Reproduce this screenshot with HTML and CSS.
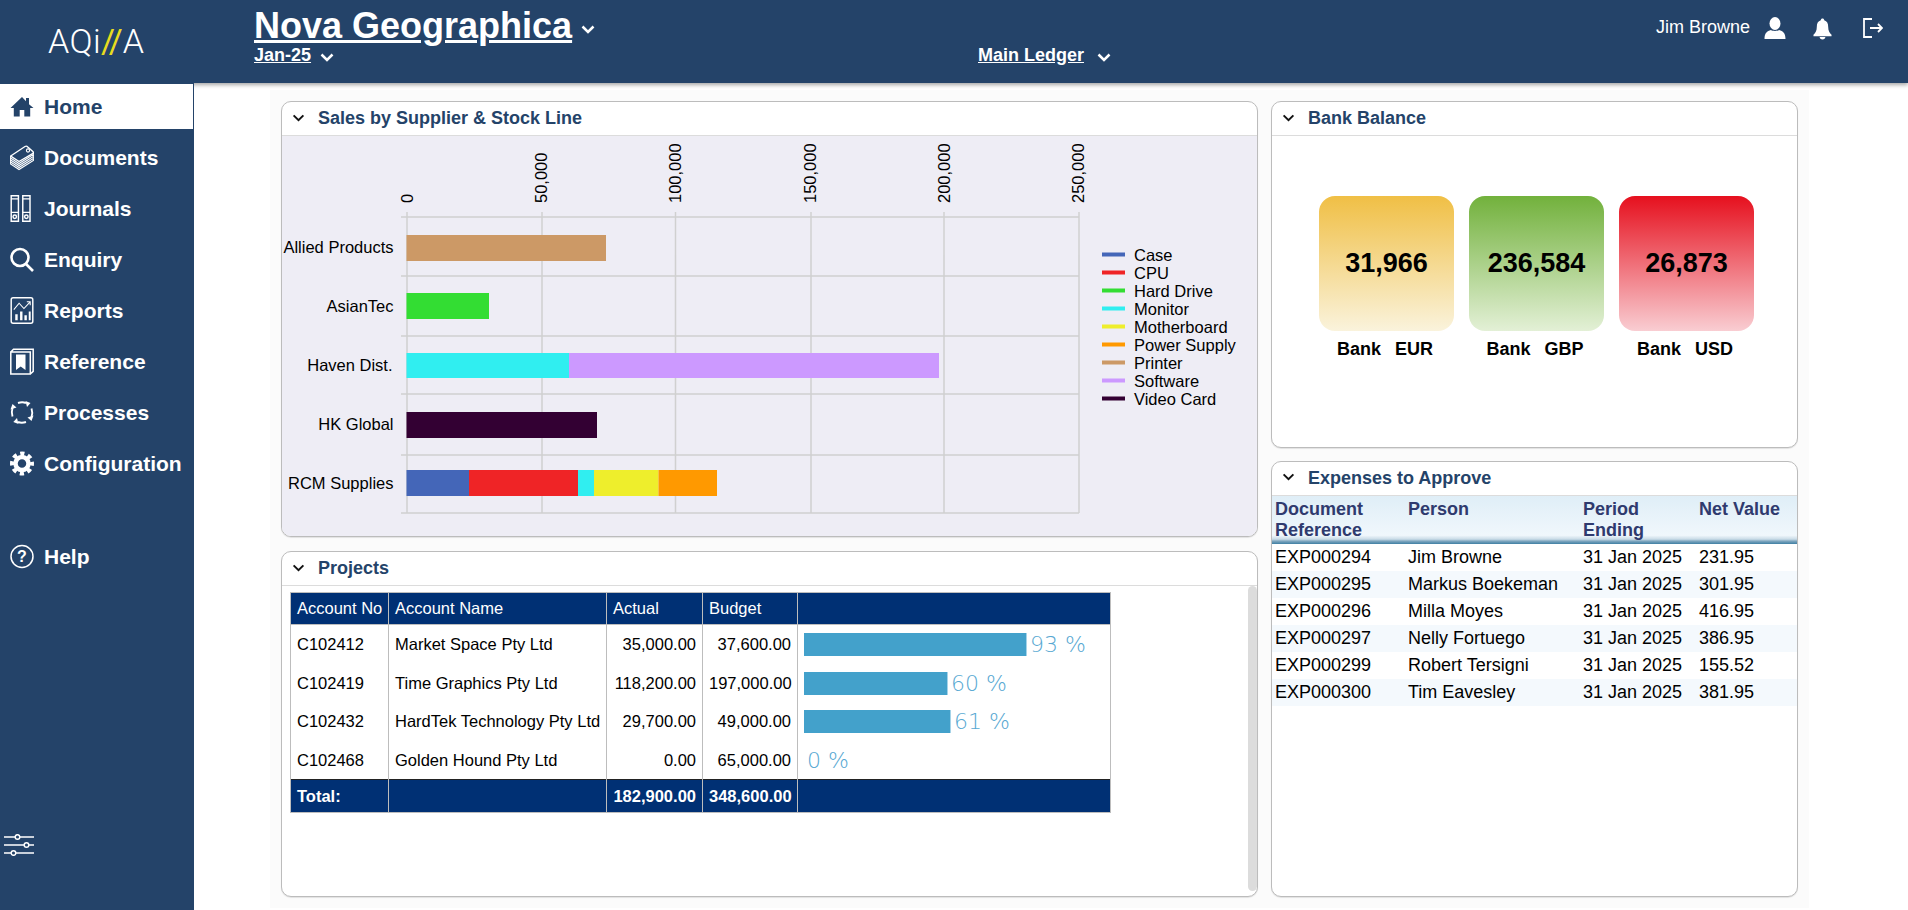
FILE: index.html
```html
<!DOCTYPE html>
<html lang="en">
<head>
<meta charset="utf-8">
<title>Nova Geographica</title>
<link rel="stylesheet" href="styles.css">
</head>
<body>
<div class="app">
  <header class="topbar">
    <div class="logo">AQi<span class="logo-slash">//</span>A</div>
    <div class="titles">
      <div class="company"><a class="company-name">Nova Geographica</a>
        <svg class="chev chev-title" viewBox="0 0 14 9"><path d="M1.500 1.500 7 7l5.500-5.500"/></svg></div>
      <div class="period"><a class="link18">Jan-25</a>
        <svg class="chev chev-sub" viewBox="0 0 14 9"><path d="M1.500 1.500 7 7l5.500-5.500"/></svg></div>
    </div>
    <div class="ledger"><a class="link18">Main Ledger</a>
      <svg class="chev chev-sub" viewBox="0 0 14 9"><path d="M1.500 1.500 7 7l5.500-5.500"/></svg></div>
    <div class="user">
      <span class="user-name">Jim Browne</span>
      <svg class="ico-user" viewBox="0 0 22 22"><ellipse cx="11" cy="6.500" rx="5.500" ry="6.500"/><path d="M0.500 22c0-6 2.500-8 6.500-9 1.200 1.200 6.800 1.200 8 0 4 1 6.500 3 6.500 9z"/></svg>
      <svg class="ico-bell" viewBox="0 0 20 22"><path d="M10 0c1 0 1.700.7 1.800 1.900 3 .8 4.200 3.500 4.200 7 0 4 1.300 6 3.500 8.100v1.500H.5V17C2.700 14.900 4 12.900 4 8.900c0-3.500 1.200-6.200 4.200-7C8.300.7 9 0 10 0z"/><path d="M7 19.500h6c0 1.500-1.300 2.500-3 2.500s-3-1-3-2.500z"/></svg>
      <svg class="ico-exit" viewBox="0 0 20 20"><path d="M9 1H1v18h8M7 10h12M15 6l4 4-4 4"/></svg>
    </div>
  </header>
  <div class="body">
    <nav class="sidebar">
      <a class="nav-item active">
        <svg class="nav-ico" viewBox="0 0 24 24"><path class="solid-dark" d="M12 2.500 0.500 13.500h3.300V22h5.900v-6.500h4.600V22h5.900v-8.500h3.300L19 9.700V3.500h-3v3.300z"/></svg>
        <span>Home</span></a>
      <a class="nav-item">
        <svg class="nav-ico" viewBox="0 0 24 24"><path class="line-thin" d="M.6 10.500v2l8.400 5.500 14.400-9v-2M.6 12.500v2l8.400 5.500 14.400-9v-2M.6 14.500v2l8.400 5.500 14.400-9v-2M.6 16.500v2l8.400 5.500 14.400-9v-2"/><path class="line" d="M.7 10.500 15 1c1-.6 2-.4 2.800.4l5 4.500c.8.800.8 1.700-.2 2.300L9 16z"/><circle class="line-thin" cx="18" cy="5" r="1.600"/></svg>
        <span>Documents</span></a>
      <a class="nav-item">
        <svg class="nav-ico" viewBox="0 0 24 28"><path class="line-mid" d="M.8.8h7.500v26.400H.800zM.8 4h7.500M.8 18h7.500M12.800.8h7.500v26.400h-7.500zM12.800 4h7.500M12.800 18h7.500"/><circle class="line-mid" cx="4.500" cy="22.500" r="1.800"/><circle class="line-mid" cx="16.500" cy="22.500" r="1.800"/></svg>
        <span>Journals</span></a>
      <a class="nav-item">
        <svg class="nav-ico" viewBox="0 0 24 24"><circle class="line-bold" cx="10" cy="10" r="8.500"/><path class="line-bold" d="M16 16.500l7 7"/></svg>
        <span>Enquiry</span></a>
      <a class="nav-item">
        <svg class="nav-ico nav-ico-tall" viewBox="0 0 24 28"><rect class="line-mid" x=".8" y=".8" width="22.400" height="26.400" rx="2"/><path class="line-thin" d="M3.500 13 9 6.500l5 5.500 6-6.500M17 5h3.500v3.500"/><path class="bars-w" d="M5 18h2.500v6H5zM10 15h2.500v9H10zM14.500 19H17v5h-2.500zM19 15h2v9h-2z"/></svg>
        <span>Reports</span></a>
      <a class="nav-item">
        <svg class="nav-ico" viewBox="0 0 24 26"><path class="line-mid" d="M.8 3.500h19.500v22H.800zM.8 3.500 3.500.8h19.700v22l-2.900 2.700"/><path class="bars-w" d="M6 6h9.500v15.500L10.700 18 6 21.500z"/></svg>
        <span>Reference</span></a>
      <a class="nav-item">
        <svg class="nav-ico" viewBox="0 0 24 24"><path class="line-strong" d="M8 2.500c3-1 5.500-1 8 0M21.500 8c1 2.800 1 5.500 0 8.500M16 21.500c-3 1-5.500 1-8 0M2.500 16C1.500 13 1.500 10.500 2.500 7.500"/><path class="bars-w" d="M15.500.5l5 2-3.500 4zM23.500 15l-2 5.500-4-3.500zM8.500 23.500 3.300 21.500 7 17.500zM.5 9 2.500 3.500 6.500 7z"/></svg>
        <span>Processes</span></a>
      <a class="nav-item">
        <svg class="nav-ico" viewBox="0 0 24 24"><circle class="gear-teeth" cx="12" cy="12" r="10"/><circle class="gear-ring" cx="12" cy="12" r="6.500"/></svg>
        <span>Configuration</span></a>
      <a class="nav-item nav-help">
        <svg class="nav-ico" viewBox="0 0 24 24"><circle class="line-mid" cx="12" cy="12" r="11"/><text class="help-q" x="12" y="17.500">?</text></svg>
        <span>Help</span></a>
      <svg class="sliders" viewBox="0 0 30 22"><path class="line-slider" d="M0 3h11M16 3h14M0 11h20M25 11h5M0 19h7M12 19h18"/><circle class="line-slider" cx="13.500" cy="3" r="2.300"/><circle class="line-slider" cx="22.500" cy="11" r="2.300"/><circle class="line-slider" cx="9.500" cy="19" r="2.300"/></svg>
    </nav>
    <main class="main">
      <div class="dash">
        <div class="col col-left">
          <section class="card card-tall">
            <div class="card-head"><svg class="chev-card" viewBox="0 0 14 9"><path d="M1.500 1.500 7 7l5.500-5.500"/></svg><h2>Sales by Supplier &amp; Stock Line</h2></div>
            <div class="chart-body">
              <svg class="chart" viewBox="282 136 974 400">
                <g class="grid">
                  <path d="M401 217H1079M401 276H1079M401 336H1079M401 394H1079M401 455H1079M401 513H1079"/>
                  <path d="M407 212V513M542 212V513M675.500 212V513M811 212V513M944 212V513M1079 212V513"/>
                </g>
                <g class="axis">
                  <text transform="translate(413 203) rotate(-90)">0</text>
                  <text transform="translate(547 203) rotate(-90)">50,000</text>
                  <text transform="translate(681 203) rotate(-90)">100,000</text>
                  <text transform="translate(816 203) rotate(-90)">150,000</text>
                  <text transform="translate(950 203) rotate(-90)">200,000</text>
                  <text transform="translate(1084 203) rotate(-90)">250,000</text>
                </g>
                <g class="cats">
                  <text x="393.500" y="253">Allied Products</text>
                  <text x="393.500" y="312">AsianTec</text>
                  <text x="392.500" y="371">Haven Dist.</text>
                  <text x="393.500" y="430">HK Global</text>
                  <text x="393.500" y="489">RCM Supplies</text>
                </g>
                <rect class="c-printer" x="406.500" y="235" width="199.500" height="26"/>
                <rect class="c-hdd" x="406.500" y="293" width="82.500" height="26"/>
                <rect class="c-monitor" x="406.500" y="353" width="162.500" height="25"/>
                <rect class="c-software" x="569" y="353" width="370" height="25"/>
                <rect class="c-video" x="406.500" y="412" width="190.500" height="26"/>
                <rect class="c-case" x="406.500" y="470" width="62.500" height="26"/>
                <rect class="c-cpu" x="469" y="470" width="109" height="26"/>
                <rect class="c-monitor" x="578" y="470" width="16" height="26"/>
                <rect class="c-mobo" x="594" y="470" width="64.500" height="26"/>
                <rect class="c-psu" x="658.500" y="470" width="58.500" height="26"/>
                <g class="legend">
                  <rect class="c-case" x="1102" y="252.500" width="23" height="4"/><text x="1134" y="261">Case</text>
                  <rect class="c-cpu" x="1102" y="270.500" width="23" height="4"/><text x="1134" y="279">CPU</text>
                  <rect class="c-hdd" x="1102" y="288.500" width="23" height="4"/><text x="1134" y="297">Hard Drive</text>
                  <rect class="c-monitor" x="1102" y="306.500" width="23" height="4"/><text x="1134" y="315">Monitor</text>
                  <rect class="c-mobo" x="1102" y="324.500" width="23" height="4"/><text x="1134" y="333">Motherboard</text>
                  <rect class="c-psu" x="1102" y="342.500" width="23" height="4"/><text x="1134" y="351">Power Supply</text>
                  <rect class="c-printer" x="1102" y="360.500" width="23" height="4"/><text x="1134" y="369">Printer</text>
                  <rect class="c-software" x="1102" y="378.500" width="23" height="4"/><text x="1134" y="387">Software</text>
                  <rect class="c-video" x="1102" y="396.500" width="23" height="4"/><text x="1134" y="405">Video Card</text>
                </g>
              </svg>
            </div>
          </section>
          <section class="card card-short">
            <div class="card-head"><svg class="chev-card" viewBox="0 0 14 9"><path d="M1.500 1.500 7 7l5.500-5.500"/></svg><h2>Projects</h2></div>
            <div class="projects-body">
              <div class="projects-wrap">
                <table class="ptable">
                  <colgroup><col class="pc1"><col class="pc2"><col class="pc3"><col class="pc4"><col class="pc5"></colgroup>
                  <thead><tr><th>Account No</th><th>Account Name</th><th>Actual</th><th>Budget</th><th></th></tr></thead>
                  <tbody>
                    <tr><td>C102412</td><td>Market Space Pty Ltd</td><td class="num">35,000.00</td><td class="num">37,600.00</td><td><div class="pct"><div class="pct-bar" style="width:223px"></div><span class="pct-text">93 %</span></div></td></tr>
                    <tr><td>C102419</td><td>Time Graphics Pty Ltd</td><td class="num">118,200.00</td><td class="num">197,000.00</td><td><div class="pct"><div class="pct-bar" style="width:144px"></div><span class="pct-text">60 %</span></div></td></tr>
                    <tr><td>C102432</td><td>HardTek Technology Pty Ltd</td><td class="num">29,700.00</td><td class="num">49,000.00</td><td><div class="pct"><div class="pct-bar" style="width:147px"></div><span class="pct-text">61 %</span></div></td></tr>
                    <tr><td>C102468</td><td>Golden Hound Pty Ltd</td><td class="num">0.00</td><td class="num">65,000.00</td><td><div class="pct"><span class="pct-text">0 %</span></div></td></tr>
                  </tbody>
                  <tfoot><tr><td>Total:</td><td></td><td class="num">182,900.00</td><td class="num">348,600.00</td><td></td></tr></tfoot>
                </table>
              </div>
              <div class="scrollbar"></div>
            </div>
          </section>
        </div>
        <div class="col col-right">
          <section class="card card-short">
            <div class="card-head"><svg class="chev-card" viewBox="0 0 14 9"><path d="M1.500 1.500 7 7l5.500-5.500"/></svg><h2>Bank Balance</h2></div>
            <div class="bank">
              <div class="bank-item"><div class="tile tile-eur">31,966</div><div class="tile-label">Bank&nbsp;&nbsp;EUR</div></div>
              <div class="bank-item"><div class="tile tile-gbp">236,584</div><div class="tile-label">Bank&nbsp;&nbsp;GBP</div></div>
              <div class="bank-item"><div class="tile tile-usd">26,873</div><div class="tile-label">Bank&nbsp;&nbsp;USD</div></div>
            </div>
          </section>
          <section class="card card-tall">
            <div class="card-head"><svg class="chev-card" viewBox="0 0 14 9"><path d="M1.500 1.500 7 7l5.500-5.500"/></svg><h2>Expenses to Approve</h2></div>
            <table class="etable">
              <colgroup><col class="ec1"><col class="ec2"><col class="ec3"><col class="ec4"></colgroup>
              <thead><tr><th>Document<br>Reference</th><th>Person</th><th>Period<br>Ending</th><th>Net Value</th></tr></thead>
              <tbody>
                <tr><td>EXP000294</td><td>Jim Browne</td><td>31 Jan 2025</td><td>231.95</td></tr>
                <tr><td>EXP000295</td><td>Markus Boekeman</td><td>31 Jan 2025</td><td>301.95</td></tr>
                <tr><td>EXP000296</td><td>Milla Moyes</td><td>31 Jan 2025</td><td>416.95</td></tr>
                <tr><td>EXP000297</td><td>Nelly Fortuego</td><td>31 Jan 2025</td><td>386.95</td></tr>
                <tr><td>EXP000299</td><td>Robert Tersigni</td><td>31 Jan 2025</td><td>155.52</td></tr>
                <tr><td>EXP000300</td><td>Tim Eavesley</td><td>31 Jan 2025</td><td>381.95</td></tr>
              </tbody>
            </table>
          </section>
        </div>
      </div>
    </main>
  </div>
</div>
</body>
</html>
```

FILE: styles.css
```css
* { box-sizing: border-box; }
html, body { margin: 0; height: 100%; }
body { font-family: "Liberation Sans", Arial, sans-serif; color: #000; background: #fff; overflow: hidden; }
.app { height: 910px; display: flex; flex-direction: column; }

/* top bar */
.topbar { height: 83px; flex: none; background: #244369; color: #fff; display: flex; position: relative; z-index: 1; box-shadow: 0 2px 4px rgba(0,0,0,.35); }
.logo { width: 254px; padding: 21px 0 0 48px; font-family: Roboto, sans-serif; font-weight: 300; font-size: 34px; line-height: 40px; flex: none; letter-spacing: .4px; }
.logo-slash { color: #e8dc1e; font-weight: 400; letter-spacing: -2.500px; margin-right: 2.500px; }
.titles { width: 724px; flex: none; padding-top: 6px; }
.company { display: flex; align-items: center; height: 40px; }
.company-name { font-size: 36px; font-weight: 700; line-height: 40px; text-decoration: underline; }
.period { display: flex; align-items: center; height: 21px; margin-top: -1px; }
.link18 { font-size: 18px; font-weight: 700; text-decoration: underline; line-height: 21px; }
.chev { fill: none; stroke: #fff; stroke-width: 2.500; }
.chev-title { width: 14px; height: 9px; margin: 6px 0 0 9px; }
.chev-sub { width: 14px; height: 9px; margin: 3px 0 0 9px; }
.ledger { display: flex; align-items: center; height: 21px; margin-top: 45px; }
.ledger .chev-sub { margin-left: 13px; }
.user { margin-left: auto; display: flex; align-items: flex-start; padding-top: 17px; }
.user-name { font-size: 18px; line-height: 21px; margin-right: 14px; }
.ico-user { width: 22px; height: 22px; fill: #fff; }
.ico-bell { width: 19px; height: 22px; fill: #fff; margin: 1px 0 0 27px; }
.ico-exit { width: 20px; height: 20px; fill: none; stroke: #fff; stroke-width: 1.800; margin: 1px 25px 0 31px; }

/* layout */
.body { flex: 1; display: flex; min-height: 0; }
.sidebar { width: 194px; flex: none; background: #244369; position: relative; z-index: 2; padding-top: 1px; display: flex; flex-direction: column; gap: 6px; }
.nav-item { height: 45px; width: 193px; flex: none; display: flex; align-items: center; padding-left: 10px; color: #fff; font-size: 21px; font-weight: 700; }
.nav-item.active { background: #fff; color: #244369; }
.nav-item span { margin-left: 10px; }
.nav-ico { width: 24px; height: 27px; flex: none; }
.nav-help { margin-top: 42px; }
.solid-dark { fill: #244369; }
.line, .line-thin, .line-mid, .line-bold, .line-strong, .line-slider { fill: none; stroke: #fff; }
.line { fill: #244369; stroke-width: 1.400; }
.line-thin { stroke-width: 1.100; }
.line-mid { stroke-width: 1.500; }
.line-strong { stroke-width: 1.900; }
.line-slider { stroke-width: 1.500; }
.line-bold { stroke-width: 2.600; }
.bars-w { fill: #fff; }
.gear-teeth { fill: none; stroke: #fff; stroke-width: 4; stroke-dasharray: 4.200 3.654; stroke-dashoffset: 2.100; }
.gear-ring { fill: none; stroke: #fff; stroke-width: 4.500; }
.help-q { fill: #fff; font-size: 16px; text-anchor: middle; font-family: "Liberation Sans", sans-serif; }
.sliders { width: 30px; height: 22px; margin: auto 0 54px 4px; flex: none; }

/* main */
.main { flex: 1; padding: 7px 0 2px 76px; min-width: 0; }
.dash { height: 100%; width: fit-content; background: #fbfbfb; padding: 11px; display: flex; gap: 13px; }
.col { display: flex; flex-direction: column; gap: 13px; }
.col-left { width: 977px; gap: 14px; }
.col-right { width: 527px; }
.card { background: #fff; border: 1px solid #bcbcbc; border-radius: 10px; overflow: hidden; display: flex; flex-direction: column; box-shadow: 0 1px 1px rgba(0,0,0,.1); }
.card-tall { height: 437px; }
.card-short { height: 347px; }
.col-left .card-short { height: 346px; }
.card-head { height: 34px; flex: none; border-bottom: 1px solid #dcdcdc; display: flex; align-items: center; padding-left: 10px; }
.card-head h2 { margin: 0 0 0 13px; font-size: 18px; font-weight: 700; color: #244369; line-height: 21px; }
.chev-card { width: 13px; height: 8px; fill: none; stroke: #111; stroke-width: 2.200; margin-top: -2px; }

/* chart */
.chart-body { flex: 1; background: #eeedf5; min-height: 0; }
.chart { display: block; width: 974px; height: 400px; }
.grid path { fill: none; stroke: #d0d0d0; stroke-width: 1.500; }
.axis text, .legend text { font-size: 16.500px; fill: #000; }
.cats text { font-size: 16.500px; fill: #000; text-anchor: end; }
.c-case { fill: #4466b8; }
.c-cpu { fill: #ef2426; }
.c-hdd { fill: #33dd33; }
.c-monitor { fill: #30eef0; }
.c-mobo { fill: #eeee2c; }
.c-psu { fill: #ff9900; }
.c-printer { fill: #cc9966; }
.c-software { fill: #cc99ff; }
.c-video { fill: #330033; }

/* projects table */
.projects-body { flex: 1; display: flex; min-height: 0; }
.projects-wrap { flex: 1; padding: 6px 0 0 8px; }
.ptable { border-collapse: collapse; table-layout: fixed; width: 820px; font-size: 16.500px; }
.pc1 { width: 98px; } .pc2 { width: 218px; } .pc3 { width: 96px; } .pc4 { width: 95px; } .pc5 { width: 313px; }
.ptable th { background: #003074; color: #fff; font-weight: 400; text-align: left; height: 32px; padding: 0 6px; border: 1px solid #bdbdbd; white-space: nowrap; }
.ptable td { height: 38.750px; padding: 0 6px; border-left: 1px solid #bdbdbd; border-right: 1px solid #bdbdbd; white-space: nowrap; overflow: hidden; }
.ptable .num { text-align: right; }
.ptable tfoot td { background: #003074; color: #fff; font-weight: 700; height: 33px; border: 1px solid #bdbdbd; border-top: 1px solid #222; }
.pct { display: flex; align-items: center; }
.pct-bar { height: 23px; background: #43a1cb; border-right: 1px solid #a5d3e8; flex: none; }
.pct-text { font-family: "DejaVu Sans", sans-serif; font-weight: 200; font-size: 22px; line-height: 23px; color: #57a8d2; margin-left: 3px; }
.scrollbar { width: 9px; flex: none; margin: 0 0 5px 0; background: #dcdcdc; border-radius: 5px; }

/* bank */
.bank { display: flex; gap: 15px; padding: 60px 0 0 47px; }
.bank-item { width: 135px; display: flex; flex-direction: column; align-items: center; }
.tile { width: 135px; height: 135px; border-radius: 16px; display: flex; align-items: center; justify-content: center; font-size: 27px; font-weight: 700; }
.tile-eur { background: linear-gradient(#f0bf45, #faf3dc); }
.tile-gbp { background: linear-gradient(#72b13c, #e3f0d6); }
.tile-usd { background: linear-gradient(#e6101e, #f9cdd2); }
.tile-label { font-size: 18px; font-weight: 700; line-height: 21px; margin-top: 8px; padding-right: 3px; word-spacing: 2px; }

/* expenses table */
.etable { border-collapse: collapse; table-layout: fixed; width: 100%; font-size: 18px; }
.ec1 { width: 133px; } .ec2 { width: 175px; } .ec3 { width: 116px; }
.etable th { height: 48px; padding: 3px 0 0 3px; text-align: left; vertical-align: top; font-weight: 700; line-height: 21px; color: #2f3a6e; background: linear-gradient(#dfeef7 0, #f0f7fc 82%, #c9dbe7 90%, #7fa6bf 94%, #3f7fa3 100%); }
.etable td { height: 27px; padding: 0 0 0 3px; white-space: nowrap; }
.etable tbody tr:nth-child(even) td { background: #f4f9fd; }
```
